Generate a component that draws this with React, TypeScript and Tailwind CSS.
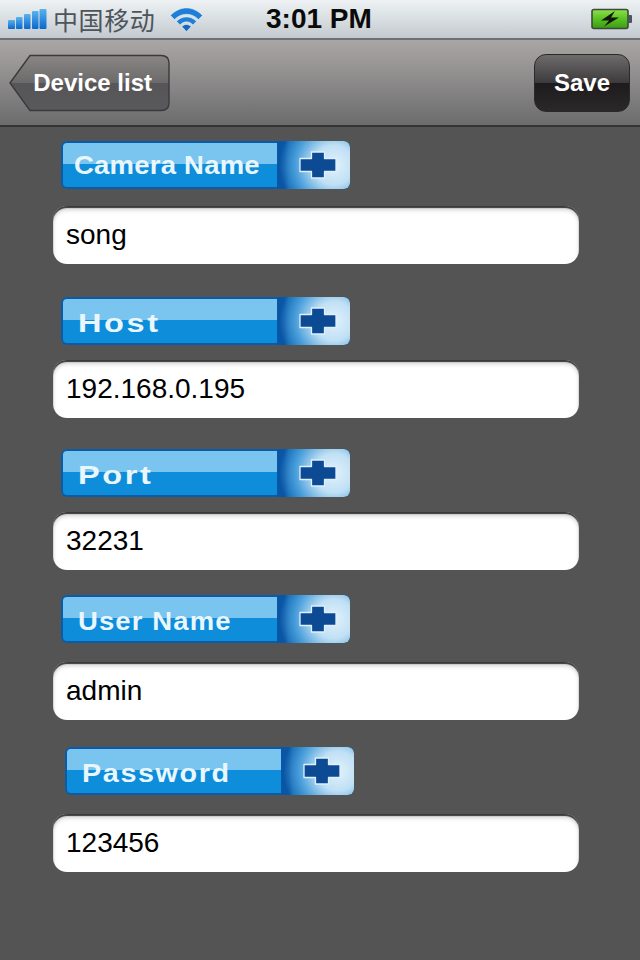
import React from 'react';

const SANS = 'font-["Liberation_Sans",Arial,sans-serif]';

const SignalBars = () => (
  <svg width="39" height="24" viewBox="0 0 39 24" className="shrink-0">
    <defs>
      <linearGradient id="sig" x1="0" y1="0" x2="0" y2="1">
        <stop offset="0" stopColor="#58b2ee" />
        <stop offset="1" stopColor="#0a68cc" />
      </linearGradient>
    </defs>
    <rect x="0" y="13" width="7" height="9" rx="1" fill="url(#sig)" />
    <rect x="8" y="10" width="6.5" height="12" rx="1" fill="url(#sig)" />
    <rect x="16" y="7" width="6.5" height="15" rx="1" fill="url(#sig)" />
    <rect x="24" y="4" width="6.5" height="18" rx="1" fill="url(#sig)" />
    <rect x="31.5" y="2" width="7" height="20" rx="1" fill="url(#sig)" />
  </svg>
);

const WifiIcon = () => (
  <svg width="33" height="25" viewBox="0 0 33 25" className="shrink-0">
    <path d="M0.5 8.5C9.5 -1.5 23.5 -1.5 32.5 8.5L28.5 12.5C21.5 5.5 11.5 5.5 4.5 12.5Z" fill="#1f7fd6" stroke="#e8f2fa" strokeWidth="0.5" />
    <path d="M6.5 14.2C12.5 8.5 20.5 8.5 26.5 14.2L23 18C19 13.8 14 13.8 10 18Z" fill="#1f7fd6" stroke="#e8f2fa" strokeWidth="0.5" />
    <path d="M11.8 19.5C15 16.8 18 16.8 21.2 19.5L16.5 24.5Z" fill="#1668bd" stroke="#e8f2fa" strokeWidth="0.5" />
  </svg>
);

const BatteryIcon = () => (
  <svg width="42" height="22" viewBox="0 0 42 22" className="shrink-0">
    <defs>
      <linearGradient id="batt" x1="0" y1="0" x2="0" y2="1">
        <stop offset="0" stopColor="#8fe04a" />
        <stop offset="0.5" stopColor="#58c222" />
        <stop offset="1" stopColor="#3c9a16" />
      </linearGradient>
    </defs>
    <rect x="1" y="1.5" width="36" height="19" rx="2" fill="url(#batt)" stroke="#3d4a38" strokeWidth="1.6" />
    <rect x="37" y="7" width="4" height="8" rx="1" fill="#4a5560" />
    <path d="M24 3L10 12.5H18L13 18.5L28 9.5H20Z" fill="#10160c" />
  </svg>
);

const PlusBlock = () => (
  <div className="h-full w-[73px] shrink-0 bg-[linear-gradient(90deg,#0a56a6_0px,#0a56a6_8px,#0f66b2_12px,#0f66b2_100%)] rounded-r-[6px]">
    <div className="flex h-full items-center justify-center pl-[8px] rounded-r-[6px] bg-[radial-gradient(circle_at_78%_50%,#e2f1fb_0%,#c0e0f5_32%,#4a9fdb_62%,rgba(15,102,178,0)_88%)]">
      <svg width="38" height="28" viewBox="0 0 38 28">
        <path
          d="M12.5 1H25.5V7.5H37V20.5H25.5V27H12.5V20.5H1V7.5H12.5Z"
          fill="#0c4a94"
          stroke="#dff0fa"
          strokeWidth="1.3"
          strokeLinejoin="round"
        />
      </svg>
    </div>
  </div>
);

const FieldLabel = ({ text, type, indent }: { text: string; type: string; indent: string }) => (
  <div className={`flex h-[48px] w-[289px] overflow-hidden rounded-[6px] ${indent}`}>
    <div className="relative flex-1 border-2 border-r-0 border-[#0a5ca8] rounded-l-[6px] bg-[linear-gradient(#7ac5ef_0%,#7ac5ef_48%,#0e8ddb_48%,#0e8ddb_100%)]">
      <span
        className={`block h-full origin-left whitespace-nowrap text-[25px] leading-[44px] font-bold text-[#e9f6fc] ${type}`}
      >
        {text}
      </span>
    </div>
    <PlusBlock />
  </div>
);

const FieldInput = ({ value }: { value: string }) => (
  <div className="flex h-[58px] w-[526px] items-center rounded-[14px] bg-white pl-[13px] text-[28px] leading-none text-black shadow-[inset_0_2px_1px_#3a3a3a,inset_0_4px_4px_rgba(0,0,0,0.18)]">
    {value}
  </div>
);

export default function App() {
  return (
    <div className={`flex h-[960px] w-[640px] flex-col overflow-hidden bg-[#545454] ${SANS}`}>
      {/* STATUS BAR */}
      <div className="relative flex h-[40px] shrink-0 items-center justify-between border-b-2 border-[#6d7073] bg-[linear-gradient(#eef2f4,#c3cacf)] pl-[8px] pr-[7px]">
        <div className="flex items-center">
          <SignalBars />
          <span className="ml-[6px] font-['Noto_Sans_CJK_SC',sans-serif] text-[25px] leading-none tracking-[0.6px] text-[#4d545a]">
            中国移动
          </span>
          <div className="ml-[15px]">
            <WifiIcon />
          </div>
        </div>
        <BatteryIcon />
        <span className="absolute left-[266px] top-[3px] text-[28px] leading-[32px] font-bold text-[#0a0a0a]">
          3:01 PM
        </span>
      </div>

      {/* NAV BAR */}
      <div className="flex h-[87px] shrink-0 items-center justify-between border-b-2 border-[#333335] bg-[linear-gradient(#aaa6a6,#8b8989_50%,#6c6c6c)] pl-[9px] pr-[10px]">
        <div className="relative flex h-[58px] w-[161px] items-center justify-end pr-[18px]">
          <svg width="161" height="58" viewBox="0 0 161 58" className="absolute inset-0">
            <defs>
              <linearGradient id="back" x1="0" y1="0" x2="0" y2="1">
                <stop offset="0" stopColor="#8a8686" />
                <stop offset="0.5" stopColor="#6b6969" />
                <stop offset="0.5" stopColor="#565557" />
                <stop offset="1" stopColor="#59585a" />
              </linearGradient>
            </defs>
            <path
              d="M1 29L21 1.5H152Q160 1.5 160 9V49Q160 56.5 152 56.5H21Z"
              fill="url(#back)"
              stroke="#3a3a3c"
              strokeWidth="1.4"
            />
          </svg>
          <span className="relative text-[24px] leading-none font-bold text-white">Device list</span>
        </div>
        <div className="flex h-[58px] w-[96px] items-center justify-center rounded-[12px] border border-[#2a2a2a] bg-[linear-gradient(#6d6b6b_0%,#3c3a3b_50%,#1d1b1d_50%,#2a2829_100%)] text-[24px] leading-none font-bold text-white">
          Save
        </div>
      </div>

      {/* FORM */}
      <div className="flex flex-col pl-[53px]">
        <div className="mt-[14px]">
          <FieldLabel text="Camera Name" type="ml-[11px] tracking-[0.2px] scale-x-[1.1]" indent="ml-[8px]" />
        </div>
        <div className="mt-[17px]">
          <FieldInput value="song" />
        </div>
        <div className="mt-[33px]">
          <FieldLabel text="Host" type="ml-[15px] pt-[2px] tracking-[2px] scale-x-[1.3]" indent="ml-[8px]" />
        </div>
        <div className="mt-[15px]">
          <FieldInput value="192.168.0.195" />
        </div>
        <div className="mt-[31px]">
          <FieldLabel text="Port" type="ml-[15px] pt-[2px] tracking-[2px] scale-x-[1.3]" indent="ml-[8px]" />
        </div>
        <div className="mt-[15px]">
          <FieldInput value="32231" />
        </div>
        <div className="mt-[25px]">
          <FieldLabel text="User Name" type="ml-[15px] pt-[2px] tracking-[1px] scale-x-[1.1]" indent="ml-[8px]" />
        </div>
        <div className="mt-[19px]">
          <FieldInput value="admin" />
        </div>
        <div className="mt-[27px]">
          <FieldLabel text="Password" type="ml-[15px] pt-[2px] tracking-[1.4px] scale-x-[1.15]" indent="ml-[12px]" />
        </div>
        <div className="mt-[19px]">
          <FieldInput value="123456" />
        </div>
      </div>
    </div>
  );
}
